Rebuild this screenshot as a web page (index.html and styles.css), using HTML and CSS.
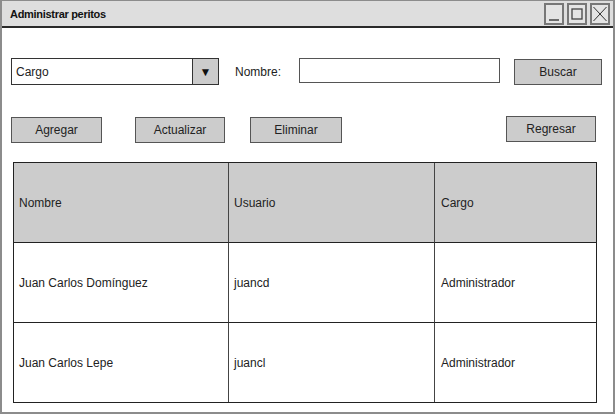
FILE: index.html
```html
<!DOCTYPE html>
<html lang="es">
<head>
<meta charset="utf-8">
<title>Administrar peritos</title>
<link rel="stylesheet" href="styles.css">
</head>
<body>
<div class="window">
  <div class="titlebar">
    <span class="title">Administrar peritos</span>
    <div class="winbtns">
      <span class="winbtn"><svg width="16" height="18" viewBox="0 0 16 18"><line x1="3" y1="15" x2="13" y2="15" stroke="#444" stroke-width="1.5"/></svg></span>
      <span class="winbtn"><svg width="16" height="18" viewBox="0 0 16 18"><rect x="3" y="4" width="10" height="10" fill="none" stroke="#444" stroke-width="1.3"/></svg></span>
      <span class="winbtn"><svg width="16" height="18" viewBox="0 0 16 18"><path d="M1.5 2 L14.5 16 M14.5 2 L1.5 16" stroke="#333" stroke-width="1"/></svg></span>
    </div>
  </div>
  <div class="content">
    <div class="row1">
      <div class="select">
        <span class="select-text">Cargo</span>
        <span class="select-arrow">▼</span>
      </div>
      <span class="label">Nombre:</span>
      <div class="input"></div>
      <button class="btn btn-buscar">Buscar</button>
    </div>
    <div class="row2">
      <button class="btn btn-agregar">Agregar</button>
      <button class="btn btn-actualizar">Actualizar</button>
      <button class="btn btn-eliminar">Eliminar</button>
      <button class="btn btn-regresar">Regresar</button>
    </div>
    <div class="table">
      <div class="cell head c1">Nombre</div>
      <div class="cell head c2">Usuario</div>
      <div class="cell head c3">Cargo</div>
      <div class="cell c1">Juan Carlos Domínguez</div>
      <div class="cell c2">juancd</div>
      <div class="cell c3">Administrador</div>
      <div class="cell c1 last">Juan Carlos Lepe</div>
      <div class="cell c2 last">juancl</div>
      <div class="cell c3 last">Administrador</div>
    </div>
  </div>
</div>
</body>
</html>
```
FILE: styles.css
```css
* { box-sizing: border-box; }
html, body { margin: 0; padding: 0; background: #fff; }
body {
  font-family: "Liberation Sans", Arial, sans-serif;
  font-size: 12px;
  color: #222;
}
.window {
  width: 615px;
  height: 414px;
  border: 2px solid #8c8c8c;
  border-top: 1px solid #8c8c8c;
  display: flex;
  flex-direction: column;
  background: #fff;
}
.titlebar {
  height: 27px;
  flex-shrink: 0;
  background: #dedede;
  border-bottom: 2px solid #2a2a2a;
  display: flex;
  align-items: center;
  justify-content: space-between;
  padding: 0 3px 0 8px;
}
.title {
  font-weight: bold;
  font-size: 11px;
  letter-spacing: -0.3px;
  color: #111;
}
.winbtns { display: flex; gap: 3px; margin-top: 1px; }
.winbtn {
  width: 20px;
  height: 22px;
  border: 2px solid #777;
  background: #e4e4e4;
  display: flex;
  align-items: center;
  justify-content: center;
}
.content {
  padding: 30px 0 0 9px;
  display: flex;
  flex-direction: column;
}
.row1 {
  display: flex;
  align-items: center;
  height: 27px;
}
.select {
  width: 208px;
  height: 27px;
  border: 1.5px solid #333;
  display: flex;
  align-items: stretch;
}
.select-text { flex: 1; padding-left: 4px; display: flex; align-items: center; }
.select-arrow {
  width: 26px;
  background: #cccccc;
  border-left: 1.5px solid #333;
  display: flex;
  align-items: center;
  justify-content: center;
  font-size: 12px;
  color: #111;
}
.label { margin-left: 16px; width: 64px; }
.input {
  width: 201px;
  height: 25px;
  border: 1.5px solid #555;
  margin-top: -2px;
  background: #fff;
}
.btn {
  font-family: "Liberation Sans", Arial, sans-serif;
  font-size: 12px;
  color: #222;
  background: #cccccc;
  border: 1.5px solid #555;
  padding: 0;
  height: 26px;
  border-radius: 0;
}
.btn-buscar { width: 88px; margin-left: 14px; }
.row2 {
  display: flex;
  align-items: center;
  margin-top: 32px;
  height: 26px;
}
.btn-agregar { width: 91px; }
.btn-actualizar { width: 90px; margin-left: 33px; }
.btn-eliminar { width: 92px; margin-left: 25px; }
.btn-regresar { width: 90px; margin-left: 164px; margin-top: -2px; }
.table {
  margin-top: 19px;
  margin-left: 2px;
  width: 584px;
  display: grid;
  grid-template-columns: 215px 206px 1fr;
  grid-template-rows: 80px 80px 1fr;
  height: 241px;
  border: 1.5px solid #222;
}
.cell {
  display: flex;
  align-items: center;
  padding-left: 5px;
  border-bottom: 1px solid #222;
  border-right: 1px solid #444;
}
.cell.c3 { border-right: none; padding-left: 6px; }
.cell.last { border-bottom: none; }
.cell.head { background: #cccccc; padding-top: 1px; }
```
